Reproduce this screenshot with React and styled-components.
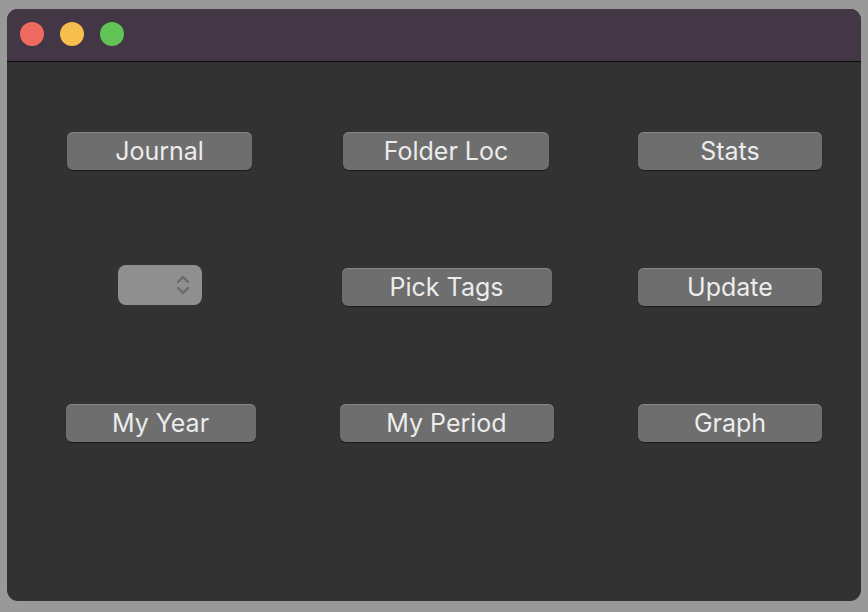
import React from 'react';
import styled, { createGlobalStyle } from 'styled-components';

const Global = createGlobalStyle`
  html, body {
    margin: 0;
    padding: 0;
    background: #999999;
  }
  body {
    font-family: Inter, "Noto Sans", "Liberation Sans", sans-serif;
  }
`;

const Screen = styled.div`
  width: 868px;
  height: 612px;
  padding: 9px 7px 11px 7px;
  box-sizing: border-box;
  display: flex;
`;

const Window = styled.div`
  flex: 1;
  display: flex;
  flex-direction: column;
  border-radius: 11px;
  overflow: hidden;
  background: #323232;
`;

const TitleBar = styled.div`
  height: 53px;
  flex-shrink: 0;
  background: #433645;
  border-bottom: 1px solid #0c0c0c;
  box-sizing: border-box;
  display: flex;
  align-items: center;
  gap: 16px;
  padding-left: 13px;
  padding-bottom: 3px;
`;

const Light = styled.span`
  width: 24px;
  height: 24px;
  border-radius: 50%;
  background: ${({ color }) => color};
`;

const Content = styled.div`
  flex: 1;
  display: grid;
  grid-template-columns: 286px 286px 282px;
  grid-auto-rows: 136px;
  padding: 21px 0 0 10px;
  align-items: center;
  justify-items: center;
`;

const Button = styled.button`
  width: ${({ w }) => w}px;
  height: 38px;
  border: none;
  border-radius: 6px;
  background: #6e6e6e;
  box-shadow: inset 0 1px 0 #878787, 0 1px 1px rgba(0, 0, 0, 0.45);
  color: #ececec;
  font-family: inherit;
  font-size: 25px;
  padding: 0 0 1px;
  margin-left: ${({ shift = 0 }) => shift}px;
  cursor: pointer;
`;

const Select = styled.div`
  width: 84px;
  height: 40px;
  border-radius: 8px;
  background: #8f8f8f;
  display: flex;
  align-items: center;
  justify-content: flex-end;
  padding-right: 12px;
  box-sizing: border-box;
  margin-left: -1px;
  margin-top: -4px;
`;

const Chevrons = () => (
  <svg width="14" height="22" viewBox="0 0 14 22" fill="none" stroke="#6a6a6a" strokeWidth="2.4" strokeLinecap="round" strokeLinejoin="round">
    <polyline points="2,8 7,3 12,8" />
    <polyline points="2,14 7,19 12,14" />
  </svg>
);

const App = () => (
  <>
    <Global />
    <Screen>
      <Window>
        <TitleBar>
          <Light color="#ee6a5f" />
          <Light color="#f5be4f" />
          <Light color="#61c454" />
        </TitleBar>
        <Content>
          <Button w={185} shift={-1}>Journal</Button>
          <Button w={206}>Folder Loc</Button>
          <Button w={184}>Stats</Button>
          <Select>
            <Chevrons />
          </Select>
          <Button w={210} shift={1}>Pick Tags</Button>
          <Button w={184}>Update</Button>
          <Button w={190} shift={1}>My Year</Button>
          <Button w={214} shift={1}>My Period</Button>
          <Button w={184}>Graph</Button>
        </Content>
      </Window>
    </Screen>
  </>
);

export default App;
